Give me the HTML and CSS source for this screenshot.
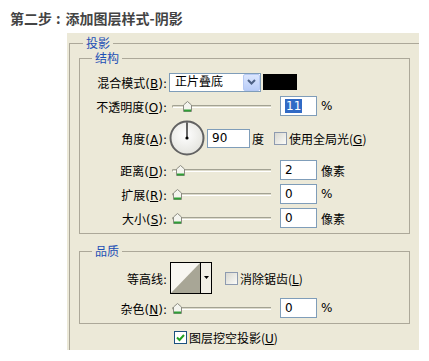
FILE: index.html
```html
<!DOCTYPE html>
<html lang="zh-CN">
<head>
    <meta charset="UTF-8">
    <meta name="viewport" content="width=device-width, initial-scale=1.0">
    <title>第二步：添加图层样式-阴影</title>
    <link rel="stylesheet" href="styles.css">
</head>
<body>
    <h1 class="step-title">第二步<span class="colon">:</span>添加图层样式-阴影</h1>

    <div class="dialog">
        <fieldset class="group group-outer">
            <legend>投影</legend>

            <!-- 结构 -->
            <fieldset class="group group-inner">
                <legend>结构</legend>
                <div class="rows">
                    <div class="row">
                        <span class="row-label">混合模式(<u>B</u>):</span>
                        <div class="row-field">
                            <div class="select">
                                <span class="select-text">正片叠底</span>
                                <span class="select-btn">
                                    <svg width="9" height="6" viewBox="0 0 9 6"><path d="M1 1 L4.5 4.5 L8 1" fill="none" stroke="#4d6185" stroke-width="2"/></svg>
                                </span>
                            </div>
                            <span class="swatch"></span>
                        </div>
                    </div>

                    <div class="row">
                        <span class="row-label">不透明度(<u>O</u>):</span>
                        <div class="row-field">
                            <div class="slider">
                                <span class="slider-track"></span>
                                <svg class="thumb" style="left: 11%" width="9" height="11" viewBox="0 0 9 11"><path d="M0.5 4 L4.5 0.5 L8.5 4 V10.5 H0.5 Z" fill="#f4f4ee" stroke="#8c8c82"/><path d="M1 9.5 H8" stroke="#2f9e35" stroke-width="2"/></svg>
                            </div>
                            <span class="field"><span class="selected">11</span></span>
                            <span class="unit">%</span>
                        </div>
                    </div>

                    <div class="row row-angle">
                        <span class="row-label">角度(<u>A</u>):</span>
                        <div class="row-field">
                            <svg class="dial" width="36" height="36" viewBox="0 0 36 36">
                                <defs>
                                    <radialGradient id="dialFill" cx="45%" cy="40%" r="65%">
                                        <stop offset="0" stop-color="#ffffff"/>
                                        <stop offset="1" stop-color="#e2e2dc"/>
                                    </radialGradient>
                                </defs>
                                <circle cx="18" cy="18" r="16.5" fill="url(#dialFill)" stroke="#626262" stroke-width="2"/>
                                <line x1="18" y1="18" x2="18" y2="2.5" stroke="#000" stroke-width="1.2"/>
                                <circle cx="18" cy="18" r="1.6" fill="#000"/>
                            </svg>
                            <span class="field field-angle">90</span>
                            <span class="unit unit-cjk">度</span>
                            <span class="check check-gap"></span>
                            <span class="check-label">使用全局光(<u>G</u>)</span>
                        </div>
                    </div>

                    <div class="row">
                        <span class="row-label">距离(<u>D</u>):</span>
                        <div class="row-field">
                            <div class="slider">
                                <span class="slider-track"></span>
                                <svg class="thumb" style="left: 4%" width="9" height="11" viewBox="0 0 9 11"><path d="M0.5 4 L4.5 0.5 L8.5 4 V10.5 H0.5 Z" fill="#f4f4ee" stroke="#8c8c82"/><path d="M1 9.5 H8" stroke="#2f9e35" stroke-width="2"/></svg>
                            </div>
                            <span class="field">2</span>
                            <span class="unit unit-cjk">像素</span>
                        </div>
                    </div>

                    <div class="row">
                        <span class="row-label">扩展(<u>R</u>):</span>
                        <div class="row-field">
                            <div class="slider">
                                <span class="slider-track"></span>
                                <svg class="thumb" style="left: 1%" width="9" height="11" viewBox="0 0 9 11"><path d="M0.5 4 L4.5 0.5 L8.5 4 V10.5 H0.5 Z" fill="#f4f4ee" stroke="#8c8c82"/><path d="M1 9.5 H8" stroke="#2f9e35" stroke-width="2"/></svg>
                            </div>
                            <span class="field">0</span>
                            <span class="unit">%</span>
                        </div>
                    </div>

                    <div class="row">
                        <span class="row-label">大小(<u>S</u>):</span>
                        <div class="row-field">
                            <div class="slider">
                                <span class="slider-track"></span>
                                <svg class="thumb" style="left: 1%" width="9" height="11" viewBox="0 0 9 11"><path d="M0.5 4 L4.5 0.5 L8.5 4 V10.5 H0.5 Z" fill="#f4f4ee" stroke="#8c8c82"/><path d="M1 9.5 H8" stroke="#2f9e35" stroke-width="2"/></svg>
                            </div>
                            <span class="field">0</span>
                            <span class="unit unit-cjk">像素</span>
                        </div>
                    </div>
                </div>
            </fieldset>

            <!-- 品质 -->
            <fieldset class="group group-inner group-quality">
                <legend>品质</legend>
                <div class="rows rows-quality">
                    <div class="row row-contour">
                        <span class="row-label">等高线:</span>
                        <div class="row-field">
                            <svg class="contour" width="42" height="32" viewBox="0 0 42 32">
                                <rect x="0.5" y="0.5" width="41" height="31" fill="#f1efe6" stroke="#000"/>
                                <polygon points="1,1 30,1 1,31" fill="#f7f6f1"/>
                                <polygon points="30,1 30,31 1,31" fill="#a8a696"/>
                                <line x1="30.5" y1="0.5" x2="30.5" y2="31.5" stroke="#000"/>
                                <polygon points="34,14 39,14 36.5,17" fill="#000"/>
                            </svg>
                            <span class="check check-contour"></span>
                            <span class="check-label">消除锯齿(<u>L</u>)</span>
                        </div>
                    </div>

                    <div class="row">
                        <span class="row-label">杂色(<u>N</u>):</span>
                        <div class="row-field">
                            <div class="slider">
                                <span class="slider-track"></span>
                                <svg class="thumb" style="left: 1%" width="9" height="11" viewBox="0 0 9 11"><path d="M0.5 4 L4.5 0.5 L8.5 4 V10.5 H0.5 Z" fill="#f4f4ee" stroke="#8c8c82"/><path d="M1 9.5 H8" stroke="#2f9e35" stroke-width="2"/></svg>
                            </div>
                            <span class="field">0</span>
                            <span class="unit">%</span>
                        </div>
                    </div>
                </div>
            </fieldset>

            <div class="knockout">
                <span class="check check-on">
                    <svg width="11" height="11" viewBox="0 0 11 11"><path d="M2 5.5 L4.5 8 L9 3" fill="none" stroke="#21a121" stroke-width="2"/></svg>
                </span>
                <span class="check-label">图层挖空投影(<u>U</u>)</span>
            </div>
        </fieldset>
    </div>
</body>
</html>
```

FILE: styles.css
```css
* {
    box-sizing: border-box;
}

body {
    margin: 0;
    background-color: #fff;
    color: #000;
    font-family: "DejaVu Sans", "Noto Sans CJK SC", sans-serif;
    font-size: 12px;
}

.step-title {
    margin: 0;
    padding: 8px 0 0 10px;
    font-family: "Noto Sans CJK SC", sans-serif;
    font-size: 14px;
    line-height: 20px;
    font-weight: bold;
    color: #444;
}

.step-title .colon {
    padding: 0 5px 0 4px;
}

.dialog {
    margin: 5px 0 0 67px;
    width: 352px;
    height: 317px;
    padding: 3px 0 0 2px;
    background-color: #ece9d8;
    overflow: hidden;
}

/* group boxes */
.group {
    margin: 0;
    padding: 0;
    min-width: 0;
    border: 1px solid #aca899;
}

.group legend {
    padding: 0 3px;
    line-height: 14px;
    color: #1c4fb5;
    font-family: "Noto Sans CJK SC", sans-serif;
}

.group-outer {
    width: 370px;
    padding-bottom: 20px;
}

.group-outer > legend {
    margin-left: 13px;
}

.group-inner {
    width: 331px;
    margin: 1px 0 0 9px;
}

.group-inner > legend {
    margin-left: 12px;
}

.group-quality {
    margin-top: 10px;
}

/* rows */
.rows {
    display: grid;
    row-gap: 4px;
    padding: 7px 0 5px;
}

.rows-quality {
    padding-top: 4px;
}

.row {
    display: grid;
    grid-template-columns: 87px 1fr;
    column-gap: 2px;
    align-items: center;
    height: 20px;
}

.row-angle {
    height: 36px;
}

.row-contour {
    height: 32px;
}

.row-label {
    text-align: right;
    white-space: nowrap;
}

.row-field {
    display: flex;
    align-items: center;
    white-space: nowrap;
}

/* blend select */
.select {
    display: flex;
    width: 92px;
    height: 19px;
    border: 1px solid #7f9db9;
    background-color: #fff;
}

.select-text {
    flex: 1;
    padding-left: 5px;
    line-height: 17px;
}

.select-btn {
    display: flex;
    align-items: center;
    justify-content: center;
    width: 17px;
    height: 17px;
    border: 1px solid #b6c9f3;
    border-radius: 2px;
    background: linear-gradient(#dbe6fe, #b9cdf8);
}

.swatch {
    width: 34px;
    height: 16px;
    margin-left: 2px;
    background-color: #000;
}

/* sliders */
.slider {
    position: relative;
    display: flex;
    align-items: center;
    width: 99px;
    height: 20px;
    margin-left: 3px;
}

.slider-track {
    width: 100%;
    height: 3px;
    border-top: 1px solid #a3a293;
    border-bottom: 1px solid #fff;
    border-left: 1px solid #a3a293;
    border-radius: 2px 0 0 2px;
    background-color: #dcdacb;
}

.thumb {
    position: absolute;
    top: 5px;
}

/* text fields */
.field {
    width: 37px;
    height: 20px;
    margin-left: 9px;
    padding-left: 4px;
    border: 1px solid #7f9db9;
    background-color: #fff;
    line-height: 18px;
}

.field-angle {
    width: 43px;
    height: 19px;
    margin-left: 2px;
    line-height: 17px;
}

.selected {
    padding: 0 1px;
    background-color: #316ac5;
    color: #fff;
}

.unit {
    margin-left: 4px;
}

.unit-cjk {
    font-family: "Noto Sans CJK SC", sans-serif;
}

.field-angle + .unit {
    margin-left: 2px;
}

.dial {
    display: block;
}

/* checkboxes */
.check {
    display: flex;
    align-items: center;
    justify-content: center;
    width: 13px;
    height: 13px;
    border: 1px solid #8e9bb0;
    background: linear-gradient(135deg, #d9d8d0, #fbfbf8);
}

.check-gap {
    margin-left: 10px;
}

.check-contour {
    margin-left: 13px;
}

.check-on {
    border-color: #1c5180;
    background: #fff;
}

.check-label {
    margin-left: 2px;
    font-family: "Noto Sans CJK SC", sans-serif;
}

.check-label u {
    font-family: "DejaVu Sans", sans-serif;
}

.contour {
    display: block;
    margin-left: 1px;
}

.knockout {
    display: flex;
    align-items: center;
    height: 16px;
    margin-top: 5px;
    padding-left: 104px;
}
```
